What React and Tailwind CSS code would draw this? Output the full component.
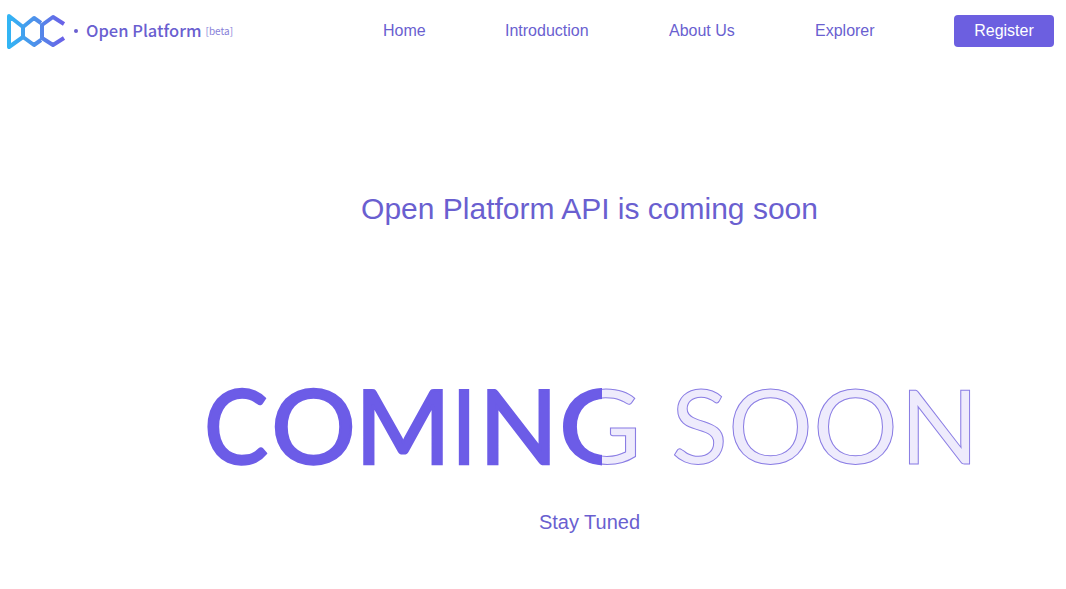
import React from "react";

const letters = [
  ["C", 204, 64],
  ["O", 271, 85],
  ["M", 355, 96],
  ["I", 452, 24],
  ["N", 479, 79],
];
const soon = [
  ["S", 671, 57],
  ["O", 728, 85],
  ["O", 813, 85],
  ["N", 900, 79],
];

function Logo() {
  return (
    <svg width="60" height="36" viewBox="5 13 60 36" fill="none" className="shrink-0">
      <defs>
        <linearGradient id="lg" x1="5" y1="0" x2="65" y2="0" gradientUnits="userSpaceOnUse">
          <stop offset="0" stopColor="#2fb8f5" />
          <stop offset="0.5" stopColor="#4f90ea" />
          <stop offset="1" stopColor="#6c5ce7" />
        </linearGradient>
      </defs>
      <path
        d="M8 16 L22 27 V37 L8 47 Z M22 27 L33 18 L40 23 M22 37 L33 45 L40 40 M63 24 L52 17 L41 25 V38 L52 45 L63 38"
        stroke="url(#lg)"
        strokeWidth="4"
        strokeLinejoin="round"
      />
    </svg>
  );
}

const type = { fontFamily: "Lato, sans-serif", fontSize: 103, y: 464 };

export default function App() {
  return (
    <div className="min-h-[589px] bg-white font-['Liberation_Sans',Arial,sans-serif] text-[#6a5fd0]">
      <header className="flex h-[62px] items-center pl-[6px]">
        <Logo />
        <div className="-mt-[1px] ml-[8px] flex w-[309px] items-center font-['Noto_Sans_CJK_SC','Noto_Sans',sans-serif]">
          <span className="mr-[8px] h-[4px] w-[4px] rounded-full bg-[#6a5fd0]" />
          <span className="text-[16.5px] font-medium">Open Platform</span>
          <span className="ml-[4px] text-[10px] opacity-80">[beta]</span>
        </div>
        <nav className="flex items-center text-base">
          <a className="w-[122px]">Home</a>
          <a className="w-[164px]">Introduction</a>
          <a className="w-[146px]">About Us</a>
          <a className="w-[139px]">Explorer</a>
          <button className="h-[32px] w-[100px] rounded-[4px] bg-[#6c5fe0] text-base text-white">Register</button>
        </nav>
      </header>

      <main className="flex flex-col items-center pl-[113px]">
        <h1 className="mt-[127px] text-[30px] leading-[40px] font-normal">Open Platform API is coming soon</h1>
        <div className="mt-[146px] h-[100px] w-[780px]">
          <svg width="780" height="100" viewBox="200 375 780 100" className="block">
            <defs>
              <clipPath id="leftHalf">
                <rect x="200" y="375" width="402" height="100" />
              </clipPath>
            </defs>
            <g fill="#6c5ce7" stroke="#6c5ce7" strokeWidth="2.4">
              {letters.map(([ch, x, w], i) => (
                <text key={i} {...type} x={x} textLength={w} lengthAdjust="spacingAndGlyphs">
                  {ch}
                </text>
              ))}
            </g>
            <g fill="#eeebfc" stroke="#8a7de4" strokeWidth="1">
              <text id="splitG" {...type} x={559} textLength={83} lengthAdjust="spacingAndGlyphs">
                G
              </text>
            </g>
            <use href="#splitG" fill="#6c5ce7" stroke="#6c5ce7" strokeWidth="2.4" clipPath="url(#leftHalf)" />
            <g fill="#eeebfc" stroke="#8a7de4" strokeWidth="1">
              {soon.map(([ch, x, w], i) => (
                <text key={i} {...type} x={x} textLength={w} lengthAdjust="spacingAndGlyphs">
                  {ch}
                </text>
              ))}
            </g>
          </svg>
        </div>
        <p className="mt-[33px] text-xl leading-[28px]">Stay Tuned</p>
      </main>
    </div>
  );
}
